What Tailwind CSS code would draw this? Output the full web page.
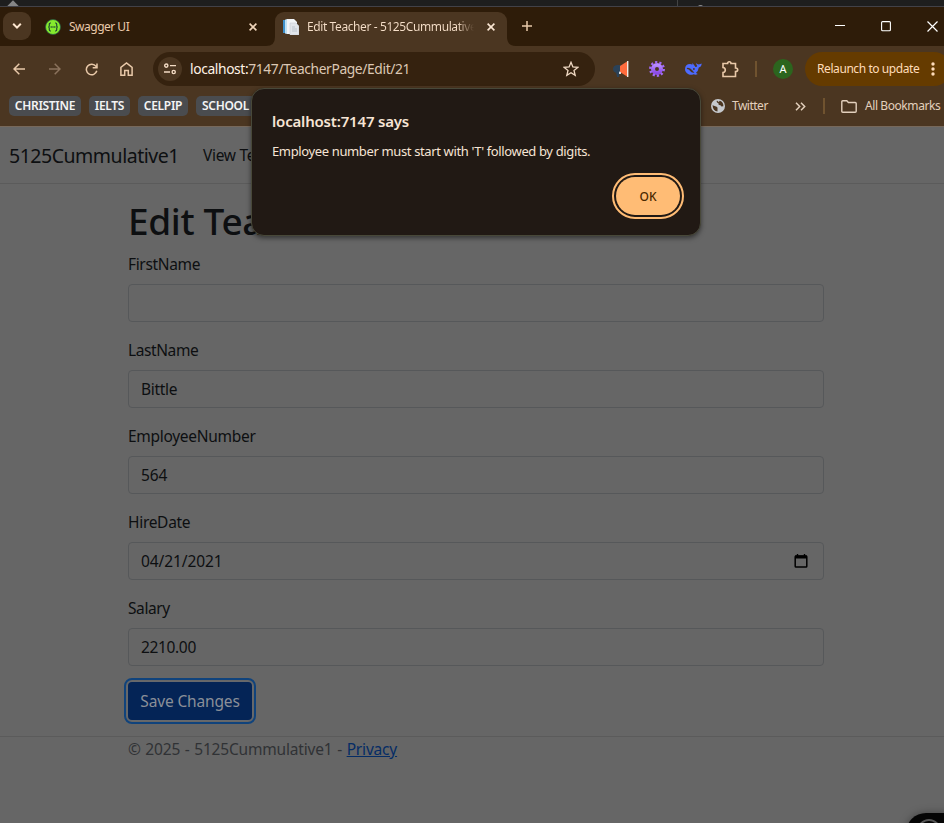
<!DOCTYPE html>
<html lang="en">
<head>
<meta charset="utf-8">
<title>Edit Teacher - 5125Cummulative1</title>
<script src="https://cdn.jsdelivr.net/npm/@tailwindcss/browser@4"></script>
</head>
<body class="w-[944px] h-[823px] overflow-hidden bg-[#666666] font-['Noto_Sans','Open_Sans',sans-serif] text-[#0d0f11] relative whitespace-nowrap">
<!-- window behind -->
<div class="h-[7px] bg-[#1e1e1e] border-b border-[#424147] relative overflow-hidden">
  <div class="absolute left-[9px] top-[2px] w-2 h-2 bg-[#858585] rotate-45"></div>
  <div class="absolute left-[677px] top-0 w-px h-[6px] bg-[#444]"></div>
  <div class="absolute left-[697px] top-[5px] w-[7px] h-[7px] rounded-full border border-[#aaa]"></div>
</div>
<!-- tabs -->
<div class="h-[39px] bg-[#2e1c09] flex items-end relative">
  <div class="w-[28px] h-[28px] rounded-[9px] bg-[#4b3621] ml-[3px] mb-[6px] flex items-center justify-center">
    <svg width="10" height="8" viewBox="0 0 10 8" fill="none" stroke="#fde6d0" stroke-width="2"><path d="M1.2 1.8 5 5.6 8.8 1.8"/></svg>
  </div>
  <div class="h-[39px] w-[228px] ml-[14px] flex items-center">
    <svg width="16" height="16" viewBox="0 0 16 16"><circle cx="8" cy="8" r="7.5" fill="#85ea2d" stroke="#2b5a42" stroke-width=".8"/><path d="M6 4H5.4Q4.3 4 4.3 5.2V6.7Q4.3 8 3.2 8 4.3 8 4.3 9.3v1.5Q4.3 12 5.4 12H6M10 4h.6q1.1 0 1.1 1.2v1.5Q11.7 8 12.8 8q-1.1 0-1.1 1.3v1.5q0 1.2-1.1 1.2H10" fill="none" stroke="#234b32" stroke-width="1.2"/><path d="M5.6 8h5" stroke="#234b32" stroke-width="1.3" stroke-dasharray="1.2 .6"/></svg>
    <span class="ml-[8px] text-[12px] tracking-[-0.500px] text-[#e9c9a9]">Swagger UI</span>
    <svg class="ml-auto mr-[16px]" width="8" height="8" viewBox="0 0 8 8" stroke="#f0d5ba" stroke-width="1.6"><path d="M.6.6l6.8 6.8M7.4.6.6 7.4"/></svg>
  </div>
  <div class="relative h-[34px] w-[232px] ml-[2px] bg-[#4b3621] rounded-t-[9px] flex items-center pb-[5px]">
    <svg class="absolute -left-[9px] bottom-0" width="9" height="9"><path d="M9 0v9H0Q9 9 9 0" fill="#4b3621"/></svg>
    <svg class="absolute -right-[9px] bottom-0" width="9" height="9"><path d="M0 0v9h9Q0 9 0 0" fill="#4b3621"/></svg>
    <svg class="ml-[8px]" width="16" height="16" viewBox="0 0 16 16"><path d="M0 1h4v13H0z" fill="#3f91cc"/><path d="M2 .8 4 0v15l-2-.6z" fill="#bfe0f3"/><path d="M4 0h7l3 3v12H4z" fill="#f2f5f8"/><path d="M7 4h6l3 3v9H7z" fill="#e1e5ea" stroke="#c0c6cd" stroke-width=".5"/><path d="M9 8h3M9 10h5M9 12h5" stroke="#aeb6c0" stroke-width=".7"/></svg>
    <span class="ml-[8px] w-[167px] overflow-hidden text-[12px] tracking-[-0.400px] bg-linear-to-r from-[#f6dfc9] from-90% to-[#4b3621] bg-clip-text text-transparent">Edit Teacher - 5125Cummulative1</span>
    <svg class="ml-[13px]" width="8" height="8" viewBox="0 0 8 8" stroke="#fbe7d4" stroke-width="1.6"><path d="M.6.6l6.8 6.8M7.4.6.6 7.4"/></svg>
  </div>
  <svg class="ml-[15px] mb-[15px]" width="10" height="10" viewBox="0 0 10 10" stroke="#e9c9a9" stroke-width="1.5"><path d="M5 0v10M0 5h10"/></svg>
  <div class="ml-auto mr-[7px] mb-[14px] flex items-center gap-[36px]">
    <svg width="10" height="11" stroke="#fff"><path d="M0 4.5h10"/></svg>
    <svg width="10" height="11" viewBox="0 0 10 11" fill="none" stroke="#fff" stroke-width="1.1"><rect x=".6" y=".6" width="8.800" height="9.200" rx="1"/></svg>
    <svg class="-mr-px" width="11" height="11" stroke="#fff" stroke-width="1.2"><path d="M.5.5l10 10M10.500.5l-10 10"/></svg>
  </div>
</div>
<!-- toolbar -->
<div class="h-[46px] bg-[#4b3621] flex items-center text-[#e9c9a9] overflow-hidden *:shrink-0">
  <svg class="ml-[13px]" width="12" height="12" viewBox="0 0 12 12" fill="none" stroke="#e9c9a9" stroke-width="1.5"><path d="M12 6H1M6.300.7 1 6l5.300 5.300"/></svg>
  <svg class="ml-[24px]" width="12" height="12" viewBox="0 0 12 12" fill="none" stroke="#8b735d" stroke-width="1.5"><path d="M0 6h11M5.700.7 11 6l-5.300 5.300"/></svg>
  <svg class="ml-[24px]" width="13" height="13" viewBox="0 0 13 13" fill="none" stroke="#e9c9a9" stroke-width="1.5"><path d="M11.800 7.800A5.300 5.300 0 1 1 11 3.400L12 4.600M12 .5v4.300H7.700"/></svg>
  <svg class="ml-[22px]" width="13" height="14" viewBox="0 0 13 14" fill="none" stroke="#e9c9a9" stroke-width="1.5"><path d="M.9 13.200V5.300L6.500 1l5.600 4.300v7.900H8.300V8.500H4.700v4.700z"/></svg>
  <div class="ml-[20px] w-[442px] h-[34px] rounded-full bg-[#35220f] flex items-center">
    <div class="ml-[5px] size-[24px] rounded-full bg-[#4b3621] flex items-center justify-center">
      <svg width="12" height="12" viewBox="0 0 12 12" fill="none" stroke="#f4dcc5" stroke-width="1.400"><circle cx="2.300" cy="2.600" r="1.600"/><path d="M6 2.600h6M0 9h6"/><circle cx="9.700" cy="9" r="1.600"/></svg>
    </div>
    <span class="ml-[8px] text-[13.800px] tracking-[-0.370px] text-[#dcc8b4]"><span class="text-[#fff3e6]">localhost:</span>7147/TeacherPage/Edit/21</span>
    <svg class="ml-auto mr-[16px]" width="16" height="16" viewBox="0 0 16 16" fill="none" stroke="#f0d9c3" stroke-width="1.300"><path d="M8 1.300 9.900 6l4.900.4-3.800 3.100 1.200 4.900L8 11.800l-4.200 2.600L5 9.500 1.200 6.400 6.100 6z"/></svg>
  </div>
  <svg class="ml-[18px]" width="16" height="16" viewBox="0 0 16 16"><path d="M8 4H4Q0 4.500 0 8t4 4h4z" fill="#2b4258"/><path d="M3 11h4l-1 5H4z" fill="#2b4258"/><path d="M7 5 14 .5v15L7 11z" fill="#ff6c3d"/><path d="M14 0h1.400v16H14z" fill="#f1e9e2"/><path d="M6 10.500 8 11v2H6z" fill="#d9dde2"/></svg>
  <svg class="ml-[20px]" width="16" height="16" viewBox="0 0 16 16"><defs><linearGradient id="g" x2="0" y2="1"><stop stop-color="#b78cff"/><stop offset="1" stop-color="#8b48e8"/></linearGradient></defs><circle cx="8" cy="8" r="4" fill="none" stroke="url(#g)" stroke-width="4"/><circle cx="8" cy="8" r="6.700" fill="none" stroke="#a26af5" stroke-width="2.500" stroke-dasharray="2.200 2.010"/></svg>
  <svg class="ml-[20px]" width="17" height="14" viewBox="0 0 17 14" fill="#4d6bfe"><path d="M0 7Q.3 2 5 2q1.500 0 2.300.7L7.500 1Q9 3 10.500 5 12 5 12.300 4 11 2.500 11.200 1q1 1.200 2.600 1.400Q15.500 2.200 16.700 1.600 16.500 5 13.800 5.600 13.300 9 11 10.800q.8.900 1.800 1.200-2 1.200-4.300.2Q6 13.300 3.500 12.200 0 10.500 0 7"/><path d="M1.800 6q3-.8 5.700 2.400 1 1.500 2 2.200-3 .5-4.300-1.500Q4 7.200 2 7z" fill="#4b3621"/><circle cx="8.900" cy="7" r=".9" fill="#4b3621"/></svg>
  <svg class="ml-[20px]" width="17" height="17" viewBox="0 0 17 17" fill="none" stroke="#e9c9a9" stroke-width="1.600"><path d="M1 2.500h4.600Q5.600.8 7.300.8T9 2.500h4.500V7q2.200 0 2.200 1.800t-2.200 1.800V15.500H1v-4q2.300-.2 2.300-2.500T1 6.500z"/></svg>
  <div class="ml-[16px] w-[2px] h-[16px] bg-[#70532f]"></div>
  <div class="ml-[16px] size-[20px] rounded-full bg-[#2c651e] text-white text-[11px] flex items-center justify-center">A</div>
  <div class="ml-[12px] w-[146px] h-[34px] rounded-full bg-[#653b00] flex items-center">
    <span class="ml-[12px] w-[104px] shrink-0 text-[12px] tracking-[-0.420px] text-[#ffdcb9]">Relaunch to update</span>
    <svg class="ml-[10px]" width="4" height="14" fill="#ffdcb9"><circle cx="2" cy="2" r="1.700"/><circle cx="2" cy="7" r="1.700"/><circle cx="2" cy="12" r="1.700"/></svg>
  </div>
</div>
<!-- bookmarks -->
<div class="h-[34px] bg-[#4b3621] flex pt-[4px] items-start text-[12px] text-[#e3d0bd]">
  <div class="flex gap-[8px] ml-[9px] font-semibold text-[#f4f4f4]">
    <div class="w-[72px] h-[20px] rounded-[5px] bg-[#4a4c4f] flex items-center justify-center tracking-[-0.300px]">CHRISTINE</div>
    <div class="w-[41px] h-[20px] rounded-[5px] bg-[#4a4c4f] flex items-center justify-center tracking-[-0.300px]">IELTS</div>
    <div class="w-[50px] h-[20px] rounded-[5px] bg-[#4a4c4f] flex items-center justify-center tracking-[-0.300px]">CELPIP</div>
    <div class="w-[60px] h-[20px] rounded-[5px] bg-[#4a4c4f] flex items-center pl-[6px] tracking-[-0.300px]">SCHOOL</div>
  </div>
  <div class="ml-[455px] h-[20px] flex items-center shrink-0">
    <svg width="14" height="14" viewBox="0 0 14 14"><circle cx="7" cy="7" r="7" fill="#c6c9cd"/><path d="M1.500 6.200 5 7.500q1.500 0 1.500 1.500v3.500Q2 12 1.500 6.200M6 1.600q-1 1.400.4 2.200 1.700.3 1.300 2.200 2.300-.4 2.700 1.500l2-.3Q12.500 3 8.800 1.700L7.700 3z" fill="#4b3621"/></svg>
    <span class="ml-[7px] w-[37px] tracking-[-0.500px]">Twitter</span>
    <svg class="ml-[26px]" width="11" height="9" viewBox="0 0 11 9" fill="none" stroke="#e3d0bd" stroke-width="1.500"><path d="M1 .8 4.700 4.500 1 8.200M6 .8l3.700 3.700L6 8.200"/></svg>
    <div class="ml-[17px] w-[2px] h-[16px] bg-[#70532f]"></div>
    <svg class="ml-[16px]" width="16" height="13" viewBox="0 0 16 13" fill="none" stroke="#e3d0bd" stroke-width="1.400"><path d="M.8 1.800Q.8.800 1.800.8h4l1.600 1.700h6.800q1 0 1 1v7.700q0 1-1 1H1.800q-1 0-1-1z"/></svg>
    <span class="ml-[8px] tracking-[-0.420px]">All Bookmarks</span>
  </div>
</div>
<div class="h-px bg-[#77685a]"></div>
<!-- page -->
<header class="h-[57px] border-b border-[#5b5b5b] flex items-center pl-[9px] pt-[2px]">
  <span class="w-[170px] text-[19.500px] tracking-[-0.480px]">5125Cummulative1</span>
  <span class="ml-[24px] text-[15.500px] tracking-[-0.300px]">View Teachers</span>
</header>
<main class="ml-[128px] w-[696px] pt-[12px] text-[16px] leading-[24px]">
  <h1 class="text-[37px] leading-[48px] font-medium mb-[8px] tracking-[-0.350px] relative top-px">Edit Teacher</h1>
  <label class="block mb-[8px] text-[15.500px] tracking-[-0.350px]">FirstName</label>
  <div class="h-[38px] mb-[16px] rounded-[4px] border border-[#56585a]"></div>
  <label class="block mb-[8px] text-[15.500px] tracking-[-0.400px]">LastName</label>
  <div class="h-[38px] mb-[16px] rounded-[4px] border border-[#56585a] px-[12px] flex items-center text-[15.500px] tracking-[-0.300px]">Bittle</div>
  <label class="block mb-[8px] text-[15.500px] tracking-[-0.290px]">EmployeeNumber</label>
  <div class="h-[38px] mb-[16px] rounded-[4px] border border-[#56585a] px-[12px] flex items-center text-[15.500px] tracking-[-0.100px]">564</div>
  <label class="block mb-[8px] text-[15.500px] tracking-[-0.300px]">HireDate</label>
  <div class="h-[38px] mb-[16px] rounded-[4px] border border-[#56585a] pl-[12px] pr-[15px] flex items-center justify-between"><span class="text-[15.500px] tracking-[-0.100px]">04/21/2021</span>
    <svg width="14" height="14" viewBox="0 0 14 14"><path d="M3.500 0v3M10.500 0v3" stroke="#000" stroke-width="1.400"/><rect x="1.200" y="2" width="11.600" height="11" rx=".8" fill="none" stroke="#000" stroke-width="1.500"/><path d="M1 1.500h12v3H1z"/></svg>
  </div>
  <label class="block mb-[8px] text-[15.500px] tracking-[-0.400px]">Salary</label>
  <div class="h-[38px] mb-[16px] rounded-[4px] border border-[#56585a] px-[12px] flex items-center text-[15.500px] tracking-[-0.350px]">2210.00</div>
  <button class="w-[124px] h-[38px] rounded-[4px] bg-[#042456] text-[#8a8f98] text-[15.500px] tracking-[-0.150px] block outline-[2px] outline-offset-[2px] outline-[#10437c] ring-1 ring-[#66696d]">Save Changes</button>
</main>
<footer class="mt-[16px] border-t border-[#5b5b5b] text-[15.500px] leading-[24px] pl-[128px] text-[#303235]">
  <span class="tracking-[-0.180px] [word-spacing:0.800px]">© 2025 - 5125Cummulative1 - <a class="underline text-[#052c65]">Privacy</a></span>
</footer>
<!-- alert -->
<div class="absolute z-10 left-[251px] top-[88px] w-[450px] h-[148px] rounded-[13px] bg-[#211914] border border-[#484839] shadow-[0_2px_5px_rgba(0,0,0,0.5)] pl-[20px] text-[#f6e4d4]">
  <div class="mt-[22px] h-[20px] leading-[20px] text-[15px] font-semibold tracking-[-0.180px]">localhost:7147 says</div>
  <div class="mt-[10px] h-[20px] leading-[20px] text-[13px] tracking-[-0.365px]">Employee number must start with 'T' followed by digits.</div>
  <div class="mt-[12px] ml-[340px] w-[72px] h-[46px] rounded-full border-2 border-[#ffbc75] p-[2px]">
    <div class="size-full rounded-full bg-[#ffbc75] flex items-center justify-center pt-px text-[12px] font-medium text-[#4a2800]">OK</div>
  </div>
</div>
<div class="absolute left-[906px] top-[813px] w-[60px] h-[40px] rounded-[20px] bg-[#050505] shadow-[0_0_8px_rgba(0,0,0,0.35)]"><div class="absolute left-[11px] top-[6px] size-[24px] rounded-full border-2 border-[#555]"></div></div>
</body>
</html>
